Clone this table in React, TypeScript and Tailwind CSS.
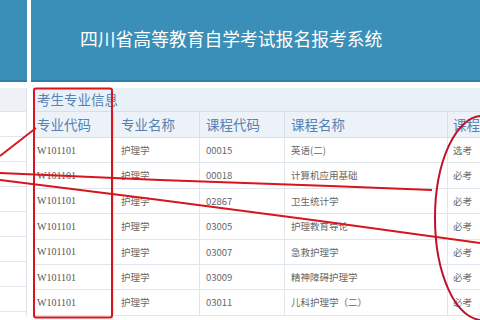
import React from "react"

const rows = [
  { code: "00015", name: "英语(二)", type: "选考" },
  { code: "00018", name: "计算机应用基础", type: "必考" },
  { code: "02867", name: "卫生统计学", type: "必考" },
  { code: "03005", name: "护理教育导论", type: "必考" },
  { code: "03007", name: "急救护理学", type: "必考" },
  { code: "03009", name: "精神障碍护理学", type: "必考" },
  { code: "03011", name: "儿科护理学（二）", type: "必考" },
]

const cjk = { fontFamily: '"Noto Sans CJK SC", "Noto Sans", sans-serif' }

export default function App() {
  return (
    <div className="relative h-[320px] w-[480px] overflow-hidden bg-white" style={cjk}>
      {/* header */}
      <div className="flex h-[82px] gap-[4px] bg-white">
        <div className="w-[27px] shrink-0 border-b-2 border-[#2f7fa6] bg-[#3a8fb8]" />
        <div className="flex flex-1 items-center border-b-2 border-[#2f7fa6] bg-[#3a8fb8] pb-[2px] pl-[49px]">
          <h1 className="text-[17.8px] leading-none text-white">四川省高等教育自学考试报名报考系统</h1>
        </div>
      </div>

      <div className="mt-[6px] flex gap-[6px]">
        {/* left panel */}
        <div className="w-[27px] shrink-0 border-r border-[#dde4ec]">
          <div className="h-[24px] border-b border-[#dde4ec] bg-[#eef2f7]" />
          {Array.from({ length: 8 }).map((_, i) => (
            <div key={i} className="h-[25px] border-b border-[#e2e7ee]" />
          ))}
        </div>

        {/* table */}
        <div className="min-w-0 flex-1 overflow-hidden border-l border-[#d5dfea]">
          <div className="flex h-[24px] items-center border-b border-[#d5dfea] bg-[#eaf0f7] pl-[3px] text-[13.5px] text-[#5582b3]">
            考生专业信息
          </div>
          <div className="flex h-[26px] border-b border-[#d5dfea] bg-[#edf2f8] text-[13.5px] text-[#5582b3]">
            <div className="flex w-[80px] shrink-0 items-center border-r border-[#d5dfea] pl-[3px]">专业代码</div>
            <div className="flex w-[86px] shrink-0 items-center border-r border-[#d5dfea] pl-[7px]">专业名称</div>
            <div className="flex w-[85px] shrink-0 items-center border-r border-[#d5dfea] pl-[6px]">课程代码</div>
            <div className="flex w-[163px] shrink-0 items-center border-r border-[#d5dfea] pl-[6px]">课程名称</div>
            <div className="flex shrink-0 items-center whitespace-nowrap pl-[5px]">课程类型</div>
          </div>
          {rows.map((r) => (
            <div key={r.code} className="flex h-[25.4px] border-b border-[#dfe6ee] text-[9.5px] text-[#666]">
              <div
                className="flex w-[80px] shrink-0 items-center border-r border-[#dfe6ee] pl-[3px] text-[10px] text-[#555]"
                style={{ fontFamily: '"Liberation Serif", serif' }}
              >
                W101101
              </div>
              <div className="flex w-[86px] shrink-0 items-center border-r border-[#dfe6ee] pl-[7px]">护理学</div>
              <div className="flex w-[85px] shrink-0 items-center border-r border-[#dfe6ee] pl-[6px]">{r.code}</div>
              <div className="flex w-[163px] shrink-0 items-center border-r border-[#dfe6ee] pl-[6px]">{r.name}</div>
              <div className="flex shrink-0 items-center pl-[5px]">{r.type}</div>
            </div>
          ))}
        </div>
      </div>

      {/* red annotations */}
      <svg className="pointer-events-none absolute left-0 top-0" width="480" height="320" viewBox="0 0 480 320">
        <rect x="34" y="88.5" width="78" height="229" rx="2" fill="none" stroke="#d8141c" strokeWidth="2" />
        <line x1="0" y1="156" x2="36" y2="128" stroke="#d8141c" strokeWidth="1.8" />
        <path d="M0 173 L160 180 L330 186 L432 190" fill="none" stroke="#d8141c" strokeWidth="2.2" />
        <path d="M0 180 L160 200 L320 221 L480 243" fill="none" stroke="#d8141c" strokeWidth="2" />
        <ellipse cx="482" cy="218" rx="47" ry="102" fill="none" stroke="#c0102a" strokeWidth="2" />
      </svg>
    </div>
  )
}
